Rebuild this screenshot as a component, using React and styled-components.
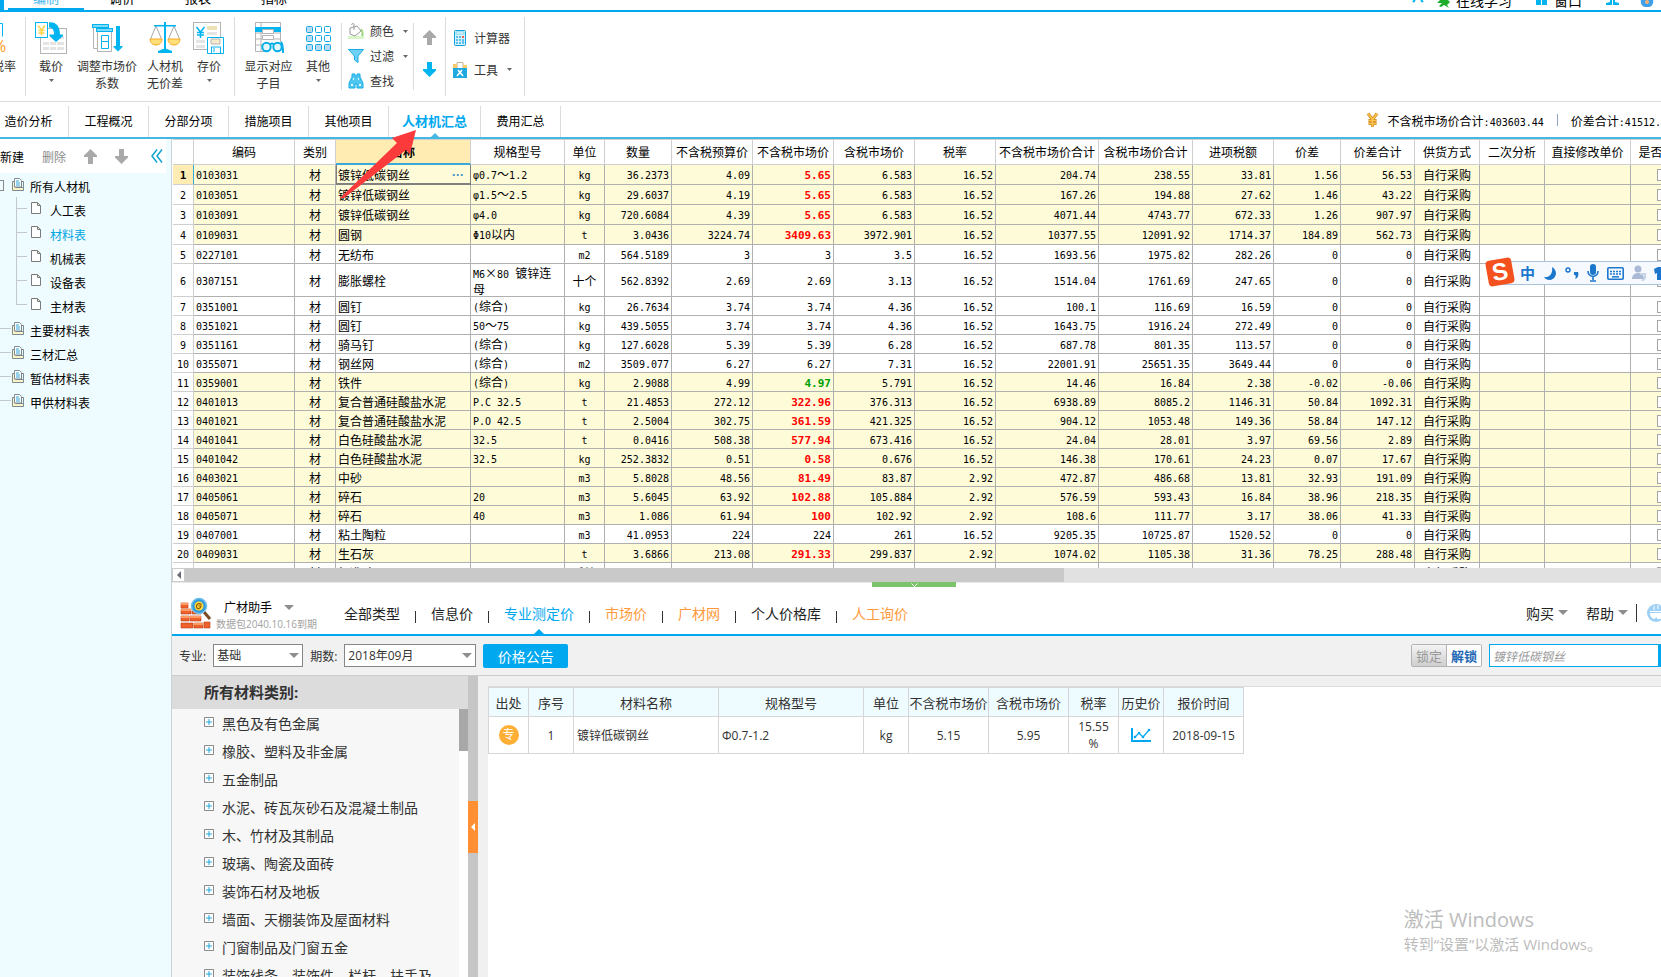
import React from 'react'
import styled, { createGlobalStyle, css } from 'styled-components'

const sans = '"Open Sans", "Noto Sans CJK SC", sans-serif'
const cjk = '"Noto Sans CJK SC", "Noto Sans", sans-serif'
const mono = '"DejaVu Sans Mono", "Noto Sans CJK SC", monospace'

const blue = '#00a8f0'
const cyan = '#00b4f0'

const GlobalStyle = createGlobalStyle`
  * {
    box-sizing: border-box;
  }
  body {
    margin: 0;
    background: #fff;
    color: #000;
    font-family: ${cjk};
    font-size: 12px;
    overflow: hidden;
  }
  button, input, select {
    font-family: inherit;
    font-size: inherit;
    color: inherit;
  }
  button {
    padding: 0;
    border: 0;
    background: none;
  }
  a {
    color: inherit;
    text-decoration: none;
  }
  svg {
    display: block;
    flex: none;
  }
`

/* ---------- data ---------- */

const menuTabs = ['编制', '调价', '报表', '指标']

const pageTabs = [
  '造价分析',
  '工程概况',
  '分部分项',
  '措施项目',
  '其他项目',
  '人材机汇总',
  '费用汇总',
]

const columns = [
  ['', 21],
  ['编码', 101],
  ['类别', 41],
  ['名称', 135],
  ['规格型号', 94],
  ['单位', 40],
  ['数量', 67],
  ['不含税预算价', 81],
  ['不含税市场价', 81],
  ['含税市场价', 81],
  ['税率', 81],
  ['不含税市场价合计', 103],
  ['含税市场价合计', 94],
  ['进项税额', 81],
  ['价差', 67],
  ['价差合计', 74],
  ['供货方式', 65],
  ['二次分析', 65],
  ['直接修改单价', 86],
  ['是否暂估', 64],
]

// code, name, spec, unit, amount, budget, market, taxed, rate, sum, taxed sum, tax, diff, diff sum
const materials = [
  ['0103031', '镀锌低碳钢丝', 'φ0.7～1.2', 'kg', '36.2373', '4.09', '5.65', '6.583', '16.52', '204.74', '238.55', '33.81', '1.56', '56.53'],
  ['0103051', '镀锌低碳钢丝', 'φ1.5～2.5', 'kg', '29.6037', '4.19', '5.65', '6.583', '16.52', '167.26', '194.88', '27.62', '1.46', '43.22'],
  ['0103091', '镀锌低碳钢丝', 'φ4.0', 'kg', '720.6084', '4.39', '5.65', '6.583', '16.52', '4071.44', '4743.77', '672.33', '1.26', '907.97'],
  ['0109031', '圆钢', 'Φ10以内', 't', '3.0436', '3224.74', '3409.63', '3972.901', '16.52', '10377.55', '12091.92', '1714.37', '184.89', '562.73'],
  ['0227101', '无纺布', '', 'm2', '564.5189', '3', '3', '3.5', '16.52', '1693.56', '1975.82', '282.26', '0', '0'],
  ['0307151', '膨胀螺栓', 'M6×80 镀锌连母', '十个', '562.8392', '2.69', '2.69', '3.13', '16.52', '1514.04', '1761.69', '247.65', '0', '0'],
  ['0351001', '圆钉', '(综合)', 'kg', '26.7634', '3.74', '3.74', '4.36', '16.52', '100.1', '116.69', '16.59', '0', '0'],
  ['0351021', '圆钉', '50～75', 'kg', '439.5055', '3.74', '3.74', '4.36', '16.52', '1643.75', '1916.24', '272.49', '0', '0'],
  ['0351161', '骑马钉', '(综合)', 'kg', '127.6028', '5.39', '5.39', '6.28', '16.52', '687.78', '801.35', '113.57', '0', '0'],
  ['0355071', '钢丝网', '(综合)', 'm2', '3509.077', '6.27', '6.27', '7.31', '16.52', '22001.91', '25651.35', '3649.44', '0', '0'],
  ['0359001', '铁件', '(综合)', 'kg', '2.9088', '4.99', '4.97', '5.791', '16.52', '14.46', '16.84', '2.38', '-0.02', '-0.06'],
  ['0401013', '复合普通硅酸盐水泥', 'P.C 32.5', 't', '21.4853', '272.12', '322.96', '376.313', '16.52', '6938.89', '8085.2', '1146.31', '50.84', '1092.31'],
  ['0401021', '复合普通硅酸盐水泥', 'P.O 42.5', 't', '2.5004', '302.75', '361.59', '421.325', '16.52', '904.12', '1053.48', '149.36', '58.84', '147.12'],
  ['0401041', '白色硅酸盐水泥', '32.5', 't', '0.0416', '508.38', '577.94', '673.416', '16.52', '24.04', '28.01', '3.97', '69.56', '2.89'],
  ['0401042', '白色硅酸盐水泥', '32.5', 'kg', '252.3832', '0.51', '0.58', '0.676', '16.52', '146.38', '170.61', '24.23', '0.07', '17.67'],
  ['0403021', '中砂', '', 'm3', '5.8028', '48.56', '81.49', '83.87', '2.92', '472.87', '486.68', '13.81', '32.93', '191.09'],
  ['0405061', '碎石', '20', 'm3', '5.6045', '63.92', '102.88', '105.884', '2.92', '576.59', '593.43', '16.84', '38.96', '218.35'],
  ['0405071', '碎石', '40', 'm3', '1.086', '61.94', '100', '102.92', '2.92', '108.6', '111.77', '3.17', '38.06', '41.33'],
  ['0407001', '粘土陶粒', '', 'm3', '41.0953', '224', '224', '261', '16.52', '9205.35', '10725.87', '1520.52', '0', '0'],
  ['0409031', '生石灰', '', 't', '3.6866', '213.08', '291.33', '299.837', '2.92', '1074.02', '1105.38', '31.36', '78.25', '288.48'],
  ['0413091', '标准砖', '', '千块', '12.3062', '300', '300', '349.56', '16.52', '3691.86', '4301.76', '609.9', '0', '0'],
]

const sourceTabs = [
  { text: '全部类型' },
  { text: '信息价' },
  { text: '专业测定价', active: true },
  { text: '市场价', color: '#ff9a3c' },
  { text: '广材网', color: '#ff9a3c' },
  { text: '个人价格库' },
  { text: '人工询价', color: '#ff9a3c' },
]

const categories = [
  '黑色及有色金属',
  '橡胶、塑料及非金属',
  '五金制品',
  '水泥、砖瓦灰砂石及混凝土制品',
  '木、竹材及其制品',
  '玻璃、陶瓷及面砖',
  '装饰石材及地板',
  '墙面、天棚装饰及屋面材料',
  '门窗制品及门窗五金',
  '装饰线条、装饰件、栏杆、扶手及其他',
]

const priceColumns = [
  ['出处', 40],
  ['序号', 45],
  ['材料名称', 145],
  ['规格型号', 145],
  ['单位', 45],
  ['不含税市场价', 80],
  ['含税市场价', 80],
  ['税率', 50],
  ['历史价', 45],
  ['报价时间', 80],
]

/* ---------- icons ---------- */

const Caret = ({ size = 5, color = '#6a6a6a' }) => (
  <svg width={size} height={Math.ceil(size / 2)} viewBox='0 0 10 5' preserveAspectRatio='none'>
    <path d='M0 0h10L5 5z' fill={color} />
  </svg>
)

const Arrow = ({ down, color }) => (
  <svg width='13' height='15' viewBox='0 0 13 15'>
    <path
      d='M6.500 0L13 6.500V8H9v7H4V8H0V6.500z'
      fill={color}
      transform={down ? 'rotate(180 6.500 7.500)' : undefined}
    />
  </svg>
)

const TaxIcon = () => (
  <svg width='32' height='32' viewBox='0 0 32 32'>
    <path d='M0 1.500h14.500v13' fill='none' stroke={cyan} />
    <text x='5' y='30' fontSize='16' fill='#ff9a1e' fontFamily='Open Sans, sans-serif'>
      %
    </text>
  </svg>
)

const LoadPriceIcon = () => (
  <svg width='32' height='32' viewBox='0 0 32 32'>
    <rect x='5.500' y='6.500' width='26' height='25' fill='#fff' stroke='#b4b4b4' />
    <path d='M8 20h6v3H8zM15 20h6v3h-6zM22 20h7v3h-7zM8 25h6v3H8zM15 25h6v3h-6zM22 25h7v3h-7zM24 14h5v3h-5z' fill='#e4e4e4' />
    <rect x='0.500' y='0.500' width='12' height='15' fill='#fff' stroke={cyan} />
    <path d='M3 3.500l3.500 4.500L10 3.500M6.500 8v5.500M3.500 8.500h6M3.500 11h6' fill='none' stroke='#ffd24a' strokeWidth='1.500' />
    <path d='M14 0.500c6-1 11 3 11 12h3v1.500L21 20l-6.500-6v-1.500H19c0-4-1-7-5-7z' fill={cyan} />
  </svg>
)

const AdjustIcon = () => (
  <svg width='32' height='32' viewBox='0 0 32 32'>
    <path d='M2.500 6v20.500H6' fill='none' stroke='#b4b4b4' />
    <rect x='1.500' y='2.500' width='16' height='3' fill='#7fd9f7' stroke={cyan} />
    <rect x='6.500' y='9.500' width='14' height='20' fill='#fff' stroke='#b4b4b4' />
    <rect x='5.500' y='6.500' width='16' height='3' fill='#7fd9f7' stroke={cyan} />
    <path d='M10.500 13.500h7v13h-7zM10.500 19.500h7' fill='#fff' stroke={cyan} />
    <path d='M25 4h4v20h2.500v1L27 29.500 22.500 25v-1H25z' fill={cyan} />
  </svg>
)

const ScaleIcon = () => (
  <svg width='32' height='32' viewBox='0 0 32 32'>
    <path d='M7 4L1.500 17M7 4l5.500 13M25 4l-5.500 13M25 4l5.500 13' stroke='#a8a8a8' fill='none' />
    <path d='M1 17h12c0 4-3 6-6 6s-6-2-6-6zM19 17h12c0 4-3 6-6 6s-6-2-6-6z' fill='#ffdf7a' stroke='#f7a821' />
    <path d='M5 3h22v1.500H5zM15 0h2v27h-2z' fill={cyan} />
    <path d='M14 27h4l5 2v2H9v-2z' fill={cyan} />
  </svg>
)

const SavePriceIcon = () => (
  <svg width='32' height='32' viewBox='0 0 32 32'>
    <rect x='0.500' y='0.500' width='27' height='27' fill='#fff' stroke='#b4b4b4' />
    <path d='M14 4h10v4H14z' fill='#efe1b6' />
    <path d='M14 10h10v3H14zM3 18h9v3H3zM3 23h9v3H3z' fill='#e4e4e4' />
    <path d='M3.500 5L7.500 10l4-5M7.500 10v6M4 10.500h7M4 13h7' fill='none' stroke={cyan} strokeWidth='1.500' />
    <path d='M14.500 15.500h16v16h-16z' fill='#fff' stroke={cyan} />
    <path d='M18 17h9v5h-9z' fill='#f6eccb' stroke='#b4b4b4' />
    <path d='M18.500 31v-6h9v6M21 26v4' fill='none' stroke={cyan} />
  </svg>
)

const ShowItemsIcon = () => (
  <svg width='32' height='32' viewBox='0 0 32 32'>
    <path d='M2.500 0.500h25v29h-25zM8 0v30M2 11h26M2 17h26M2 23h26' fill='#fff' stroke='#b4b4b4' />
    <path d='M2 5h26v5H2z' fill={cyan} />
    <path d='M9.500 7.500h11v4h-11zM9.500 13.500h11v4h-11z' fill='#fff' stroke='#b4b4b4' />
    <path d='M12 20h18v11H12z' fill='#fff' />
    <g fill='#e5f8fe' stroke='#08aee8' strokeWidth='2'>
      <circle cx='13.500' cy='25' r='4.200' />
      <circle cx='24.500' cy='25' r='4.200' />
      <path d='M17 23c1-2 3-2 4 0M28 20c2 2 2 6 2 11' fill='none' />
    </g>
  </svg>
)

const GridIcon = () => (
  <svg width='32' height='32' viewBox='0 0 32 32'>
    {[0, 1, 2].map((row) =>
      [0, 1, 2].map((col) => (
        <rect
          key={`${row}${col}`}
          x={4.5 + col * 9}
          y={4.5 + row * 9}
          width='6'
          height='6'
          rx='1'
          fill={col === 0 || row === 2 ? '#b9dcf2' : '#fff'}
          stroke='#12a9e4'
        />
      ))
    )}
  </svg>
)

const ColorIcon = () => (
  <svg width='16' height='16' viewBox='0 0 16 16'>
    <path d='M0 13h16v3H0z' fill='#d8f7c8' />
    <path d='M2 5l7-2 4 5-6 5-5-2zM6 7V1.500C6 0 3 0 4 2' fill='#fff' stroke='#999' />
    <path d='M13 6c2 3 2 5 1 7' fill='none' stroke='#9bd67d' strokeWidth='2' />
  </svg>
)

const FilterIcon = () => (
  <svg width='16' height='16' viewBox='0 0 16 16'>
    <path d='M0.500 1.500h15L10 8v6.500L6.500 12V8z' fill='#6fd0f5' stroke='#1baee6' />
  </svg>
)

const FindIcon = () => (
  <svg width='16' height='16' viewBox='0 0 16 16'>
    <path d='M4 1h3v2h2V1h3v3l3 6v5h-6v-4H7v4H1v-5l3-6z' fill='#4fc6f0' stroke='#14aee6' />
    <path d='M3 11h2v2H3zM11 11h2v2h-2zM5 5h1v2H5zM10 5h1v2h-1z' fill='#d9f5ff' />
  </svg>
)

const CalcIcon = () => (
  <svg width='16' height='16' viewBox='0 0 16 16'>
    <rect x='2.500' y='0.500' width='11' height='15' rx='1' fill='#d6f3fd' stroke='#0f9fdc' />
    <path d='M4 2h8v2H4z' fill='#fff' stroke='#3db8ea' strokeWidth='0.600' />
    <path d='M4 6h2v2H4zM7 6h2v2H7zM4 9h2v2H4zM7 9h2v2H7zM4 12h2v2H4zM7 12h2v2H7zM10 9h2v5h-2z' fill='#5cc1ea' />
    <path d='M10 6h2v2h-2z' fill='#f35b4f' />
  </svg>
)

const ToolIcon = () => (
  <svg width='16' height='16' viewBox='0 0 16 16'>
    <path d='M5 0.500h6v7H5z' fill='#fff' stroke='#c4b592' />
    <path d='M1 2h4v4H1zM11 3h4v4h-4z' fill='#f7cd6b' />
    <path d='M1 6h14v10H1z' fill='#1fa9e1' />
    <path d='M6 8l5 6M10 8l-5 6' stroke='#fff' strokeWidth='1.500' />
  </svg>
)

const YuanIcon = () => (
  <svg width='13' height='16' viewBox='0 0 13 16'>
    <path d='M2 1.500l4.500 6 4.500-6M6.500 7v8M2.500 8.500h8M2.500 11.500h8' fill='none' stroke='#c98a2b' strokeWidth='3' />
    <path d='M2 1.500l4.500 6 4.500-6M6.500 7v8M2.500 8.500h8M2.500 11.500h8' fill='none' stroke='#ffc34d' strokeWidth='1.600' />
  </svg>
)

const FolderIcon = () => (
  <svg width='12' height='13' viewBox='0 0 12 13'>
    <path d='M0.500 3.500h3v6h8v3H0.500z' fill='#fdf3c9' stroke='#7d8a90' />
    <path d='M2.500 0.500h5l2 2v6.500h-7z' fill='#fff' stroke='#7d8a90' />
    <path d='M4 3h3M4 5h4M4 7h4' stroke='#2aa4d8' />
    <path d='M9.500 3.500h2v6' fill='none' stroke='#7d8a90' />
  </svg>
)

const PageIcon = () => (
  <svg width='11' height='12' viewBox='0 0 11 12'>
    <path d='M0.500 0.500h6l3 3v8h-9zM6.500 0.500v3h3' fill='#fff' stroke='#7b7b7b' />
  </svg>
)

const PlusBox = () => (
  <svg width='10' height='10' viewBox='0 0 10 10'>
    <path d='M0.500 0.500h9v9h-9z' fill='#fff' stroke='#8a8a8a' />
    <path d='M2 5h6M5 2v6' stroke='#1ea5d8' />
  </svg>
)

const HelperLogo = () => (
  <svg width='32' height='32' viewBox='0 0 32 32'>
    <g stroke='#b83c14' strokeWidth='0.600'>
      <path d='M1 6h7v5H1zM1 12h10v5H1zM12 14h9v3h-9zM1 19h8v5H1zM10 19h11v5H10zM1 26h12v5H1zM14 26h9v5h-9zM24 25h6v6h-6z' fill='#f0622d' />
    </g>
    <path d='M1 6h7v2H1zM1 12h10v2H1zM1 19h8v2H1zM10 19h11v2H10zM14 26h9v2h-9z' fill='#ff9a63' />
    <path d='M24 15l6 7' stroke='#7a4a20' strokeWidth='3' />
    <circle cx='19' cy='9' r='7.500' fill='#2f9be0' stroke='#6fbfe9' strokeWidth='1.500' />
    <circle cx='19' cy='9' r='4.500' fill='#ffd83a' />
    <path d='M21.500 7.500c-3-2-5.500 0-5 2.500s4 2 4.500-1h-2.500' fill='none' stroke='#8a5a00' strokeWidth='1.200' />
  </svg>
)

const ChartIcon = () => (
  <svg width='20' height='16' viewBox='0 0 20 16'>
    <path d='M1 1v13h19' fill='none' stroke={blue} strokeWidth='2' />
    <path d='M4 10l4-4 4 4 6-7' fill='none' stroke={blue} strokeWidth='1.200' />
    <g fill={blue}>
      <circle cx='4' cy='10' r='1.300' />
      <circle cx='8' cy='6' r='1.300' />
      <circle cx='12' cy='10' r='1.300' />
      <circle cx='18' cy='3' r='1.300' />
    </g>
  </svg>
)

/* ---------- top ---------- */

const Page = styled.div`
  position: relative;
  display: flex;
  flex-direction: column;
  height: 100vh;
  overflow: hidden;
`

const MenuBar = styled.header`
  display: flex;
  justify-content: space-between;
  height: 12px;
  flex: none;
  border-bottom: 2px solid ${blue};
  overflow: hidden;
`

const MenuGroup = styled.div`
  display: flex;
  align-items: flex-end;
  gap: ${({ $gap }) => $gap || 0}px;
  padding-left: 4px;
  ${({ $edge }) => $edge && `border-left: 4px solid ${blue};`}
`

const MenuTab = styled.button`
  width: 76px;
  flex: none;
  font-size: 13px;
  line-height: 16px;
  padding-bottom: ${({ $active }) => ($active ? 2 : 4)}px;
  ${({ $active }) =>
    $active && `color: #3fb6ee; border-bottom: 2px solid ${blue};`}
`

const MenuLink = styled.a`
  display: flex;
  align-items: flex-end;
  gap: 6px;
  font-size: 14px;
  line-height: 16px;
  padding-bottom: 2px;
`

const Ribbon = styled.div`
  display: flex;
  height: 90px;
  flex: none;
  padding: 5px 0;
  border-bottom: 1px solid #dcdcdc;
  color: #333;
`

const RibbonGroup = styled.div`
  display: flex;
  padding-right: ${({ $end }) => $end || 0}px;
  border-right: 1px solid #dcdcdc;
  ${({ $clip }) => $clip && 'margin-left: -17px;'}
`

const RibbonButton = styled.button`
  display: flex;
  flex-direction: column;
  align-items: center;
  width: ${({ $width }) => $width}px;
  padding-top: 5px;
  line-height: 17px;
  white-space: nowrap;
  svg + span {
    margin-top: 3px;
    margin-bottom: 5px;
  }
`

const SmallColumn = styled.div`
  display: flex;
  flex-direction: column;
  justify-content: ${({ $spread }) => ($spread ? 'center' : 'flex-start')};
  align-items: ${({ $center }) => ($center ? 'center' : 'stretch')};
  gap: ${({ $gap }) => $gap || 0}px;
  width: ${({ $width }) => $width}px;
  margin: 6px 0;
  padding: 0 6px ${({ $spread }) => ($spread ? 6 : 0)}px;
  ${({ $line }) => $line && 'border-left: 1px solid #dcdcdc; margin-left: 7px;'}
`

const ArrowColumn = styled(SmallColumn)`
  margin-left: 0;
`

const SmallButton = styled.button`
  display: flex;
  align-items: center;
  gap: 6px;
  height: 16px;
  line-height: 16px;
  white-space: nowrap;
  span {
    margin-right: 3px;
  }
`

const PageTabs = styled.nav`
  display: flex;
  align-items: stretch;
  height: 37px;
  flex: none;
  border-bottom: 2px solid #46b6e2;
  white-space: nowrap;
`

const PageTab = styled.a`
  position: relative;
  display: flex;
  align-items: center;
  justify-content: center;
  width: ${({ $active }) => ($active ? 92 : 80)}px;
  margin-top: 4px;
  padding-bottom: 2px;
  border-right: 1px solid #dcdcdc;
  &:first-child {
    margin-left: -11px;
  }
  ${({ $active }) =>
    $active &&
    css`
      color: ${blue};
      font-size: 13px;
      font-weight: 700;
      &::after {
        content: '';
        position: absolute;
        bottom: 0;
        border: 4px solid transparent;
        border-top: 0;
        border-bottom-color: #46b6e2;
      }
    `}
`

const Totals = styled.div`
  display: flex;
  align-items: center;
  gap: 9px;
  margin-left: auto;
  padding-top: 1px;
`

const Digits = styled.span`
  font-family: ${mono};
  font-size: ${({ $strong }) => ($strong ? 11 : 10)}px;
`

const Bar = styled.i`
  width: 1px;
  height: ${({ $height }) => $height || 12}px;
  margin: ${({ $margin }) => $margin || '0 4px'};
  background: ${({ $color }) => $color || '#8fa3c0'};
`

/* ---------- left tree ---------- */

const Body = styled.div`
  display: flex;
  flex: 1;
  min-height: 0;
`

const Side = styled.aside`
  width: 172px;
  flex: none;
  background: #effcff;
  border-right: 1px solid #c9d3d6;
`

const SideTools = styled.div`
  display: flex;
  align-items: center;
  gap: 18px;
  width: 166px;
  height: 34px;
  background: #fff;
  white-space: nowrap;
`

const DeleteButton = styled.button`
  color: #8c8c8c;
`

const FoldButton = styled.button`
  margin-left: 5px;
`

const Tree = styled.ul`
  margin: 0;
  padding: 1px 0 0;
  list-style: none;
`

const TreeItem = styled.li`
  position: relative;
  display: flex;
  align-items: center;
  height: 24px;
  gap: ${({ $child }) => ($child ? 8 : 6)}px;
  padding-left: ${({ $child }) => ($child ? 31 : 12)}px;
  color: ${({ $active }) => ($active ? '#00a5e0' : '#000')};
  svg {
    margin-bottom: 4px;
  }
  &::before {
    content: '';
    position: absolute;
    top: 10px;
    left: ${({ $child }) => ($child ? 16 : 0)}px;
    width: 11px;
    border-top: 1px solid #c3c9cb;
  }
  ${({ $root }) =>
    $root &&
    css`
      &::before {
        top: 6px;
        width: 3px;
        height: 9px;
        border: 1px solid #8a8a8a;
        border-left: 0;
      }
    `}
  ${({ $child, $last }) =>
    $child &&
    css`
      &::after {
        content: '';
        position: absolute;
        top: -1px;
        left: 16px;
        height: ${$last ? 11 : 24}px;
        border-left: 1px solid #c3c9cb;
      }
    `}
`

/* ---------- materials table ---------- */

const Content = styled.main`
  display: flex;
  flex-direction: column;
  flex: 1;
  min-width: 0;
`

const GridBox = styled.div`
  height: 429px;
  flex: none;
  padding-left: 1px;
  overflow: hidden;
`

const Grid = styled.table`
  width: 1522px;
  table-layout: fixed;
  border-collapse: separate;
  border-spacing: 0;
  line-height: 14px;
`

const HeadCell = styled.th`
  height: 26px;
  padding: 0;
  border: solid #cfcfcf;
  border-width: 1px 1px 1px 0;
  font-weight: ${({ $active }) => ($active ? 700 : 400)};
  white-space: nowrap;
  ${({ $active }) =>
    $active && 'background: #ffecb3; border-bottom: 2px solid #3aa9d8;'}
`

const Row = styled.tr`
  height: ${({ $height }) => $height}px;
  background: ${({ $changed }) => ($changed ? '#fefbd8' : '#fff')};
  && > * {
    padding-top: ${({ $height }) => ($height === 20 ? 0 : 1)}px;
  }
`

const Cell = styled.td`
  padding: 0 2px;
  border: solid #b0b0b0;
  border-width: 0 1px 1px 0;
  text-align: ${({ $align }) => $align || 'left'};
  font-weight: ${({ $tone }) => ($tone ? 700 : 400)};
  color: ${({ $tone }) => $tone || '#000'};
  ${({ $selected }) =>
    $selected &&
    'border-color: #808080; box-shadow: inset 0 -1px #808080, inset 1px 0 #808080;'}
`

const NumberCell = styled.th`
  padding: 0;
  border: solid #cfcfcf;
  border-width: 0 1px 1px 0;
  background: ${({ $active }) => ($active ? '#ffecb3' : '#fff')};
  font-weight: ${({ $active }) => ($active ? 700 : 400)};
  ${({ $active }) => $active && 'border-right-color: #3aa9d8;'}
`

const NameBox = styled.div`
  display: flex;
  justify-content: space-between;
  white-space: nowrap;
  button {
    padding-right: 4px;
    color: #3a8fd0;
    font-family: 'Liberation Sans', sans-serif;
    font-weight: 700;
    line-height: 12px;
  }
`

const Tick = styled.input`
  appearance: none;
  display: block;
  width: 12px;
  height: 12px;
  margin: 0 auto;
  border: 1px solid #a6a6a6;
  background: #fff;
`

const ScrollBar = styled.div`
  display: flex;
  height: 14px;
  flex: none;
  background: #e1e1e1;
  button {
    display: grid;
    place-items: center;
    width: 13px;
    background: #fff;
    border: 1px solid #ccc;
  }
  div {
    width: 59%;
    background: #c9c9c9;
  }
`

const Divider = styled.div`
  display: flex;
  justify-content: center;
  height: 5px;
  flex: none;
  padding-right: 5px;
  border-top: 1px solid #e8e8e8;
`

const DividerGrip = styled.button`
  display: grid;
  place-items: center;
  width: 84px;
  height: 5px;
  margin-top: -1px;
  background: #7cc46c;
`

/* ---------- price helper ---------- */

const HelperHead = styled.div`
  display: flex;
  align-items: center;
  height: 49px;
  flex: none;
  padding-left: 8px;
  border-bottom: 2px solid ${blue};
  font-family: ${sans};
  white-space: nowrap;
  > svg {
    margin-top: 5px;
  }
`

const HelperName = styled.div`
  width: 132px;
  padding: 9px 0 0 4px;
  line-height: 16px;
  button {
    display: flex;
    align-items: center;
    gap: 12px;
    padding-left: 8px;
  }
  small {
    display: block;
    font-size: 10px;
    color: #a2a2a2;
  }
`

const SourceTab = styled.button`
  position: relative;
  height: 47px;
  padding: 5px 0 0;
  font-size: 14px;
  color: ${({ $color }) => $color || '#222'};
  ${({ $active }) =>
    $active &&
    css`
      color: ${blue};
      &::after {
        content: '';
        position: absolute;
        bottom: 0;
        left: 50%;
        margin-left: -5px;
        border: 5px solid transparent;
        border-top: 0;
        border-bottom-color: ${blue};
      }
    `}
`

const HeadLinks = styled.div`
  display: flex;
  align-items: center;
  gap: 18px;
  margin-left: auto;
  padding-top: 4px;
  font-size: 14px;
  color: #222;
  button {
    display: flex;
    align-items: center;
    gap: 4px;
  }
`

const FilterBar = styled.form`
  display: flex;
  align-items: center;
  height: 40px;
  flex: none;
  padding-left: 7px;
  background: #f1f1f1;
  border-bottom: 1px solid #cdcdcd;
  color: #333;
  font-family: ${sans};
`

const SelectBox = styled.div`
  position: relative;
  width: ${({ $width }) => $width}px;
  margin: 0 7px;
  select {
    appearance: none;
    display: block;
    width: 100%;
    height: 23px;
    padding: 0 3px;
    border: 1px solid #868686;
    border-radius: 0;
    background: #fff;
  }
  svg {
    position: absolute;
    top: 9px;
    right: 4px;
    pointer-events: none;
  }
`

const NoticeButton = styled.button`
  width: 85px;
  height: 24px;
  border-radius: 2px;
  background: ${blue};
  color: #fff;
  font-size: 14px;
`

const LockGroup = styled.div`
  display: flex;
  height: 23px;
  margin-left: auto;
  margin-right: 7px;
  border: 1px solid #b3b3b3;
  border-radius: 2px;
  font-size: 13px;
`

const LockButton = styled.button`
  width: 34px;
  background: ${({ $on }) =>
    $on ? '#fdfdfd' : 'linear-gradient(#f4f4f4, #cfcfcf)'};
  color: ${({ $on }) => ($on ? '#2268b4' : '#999')};
  font-weight: ${({ $on }) => ($on ? 700 : 400)};
  & + & {
    width: 35px;
    border-left: 1px solid #b3b3b3;
  }
`

const SearchInput = styled.input`
  width: 170px;
  height: 23px;
  padding: 0 3px;
  border: 1px solid ${blue};
  border-radius: 0;
  background: #fff;
  color: #999;
  font-style: italic;
`

const SearchButton = styled.button`
  width: 2px;
  height: 23px;
  background: ${blue};
`

const HelperBody = styled.div`
  display: flex;
  flex: 1;
  min-height: 0;
  font-family: ${sans};
  color: #333;
`

const Categories = styled.section`
  display: flex;
  flex-direction: column;
  width: 296px;
  flex: none;
  background: #f7f7f7;
  h2 {
    flex: none;
    height: 33px;
    margin: 0;
    padding-left: 32px;
    background: #dcdcdc;
    font-size: 15px;
    line-height: 33px;
  }
`

const CategoryScroll = styled.div`
  display: flex;
  min-height: 0;
  flex: 1;
  overflow: hidden;
  ul {
    flex: 1;
    min-width: 0;
    margin: 0;
    padding: 1px 0 0 32px;
    list-style: none;
  }
  li {
    display: flex;
    align-items: center;
    gap: 8px;
    height: 28px;
    font-size: 14px;
    overflow: hidden;
  }
  li svg {
    margin-bottom: 4px;
  }
  li span {
    width: 212px;
    height: 28px;
    line-height: 28px;
  }
`

const Track = styled.div`
  width: 9px;
  background: #fff;
  &::before {
    content: '';
    display: block;
    height: 42px;
    background: #a8a8a8;
  }
`

const Splitter = styled.div`
  width: 10px;
  flex: none;
  padding-top: 125px;
  background: #c6c6c6;
  button {
    display: grid;
    place-items: center;
    width: 10px;
    height: 52px;
    background: #ff8f33;
  }
`

const PriceArea = styled.section`
  flex: 1;
  min-width: 0;
  padding: 10px 0 0 10px;
  background: #f0f0f0;
`

const PriceSheet = styled.div`
  height: 100%;
  background: #fff;
  border-top: 1px solid #dcdcdc;
`

const PriceTable = styled.table`
  width: 755px;
  table-layout: fixed;
  border-collapse: collapse;
  text-align: center;
  th,
  td {
    padding: 0;
    border: 1px solid #d6d6d6;
  }
  th {
    height: 29px;
    background: #effcff;
    font-size: 13px;
    font-weight: 400;
    white-space: nowrap;
  }
  td {
    height: 37px;
    line-height: 17px;
  }
  td:nth-child(3),
  td:nth-child(4) {
    padding-left: 3px;
    text-align: left;
  }
  td svg {
    margin: 0 auto;
  }
`

const SourceBadge = styled.span`
  display: block;
  width: 20px;
  height: 20px;
  margin: 0 auto;
  border-radius: 50%;
  background: #ffaf35;
  color: #fff;
  line-height: 20px;
`

const Watermark = styled.div`
  position: absolute;
  right: 59px;
  bottom: 22px;
  font-family: ${sans};
  font-size: 15px;
  line-height: 22px;
  color: #bcbcbc;
  p {
    margin: 0;
  }
  p:first-child {
    font-size: 20px;
    line-height: 26px;
  }
`

/* ---------- floating parts ---------- */

const Pointer = styled.svg`
  position: absolute;
  left: 338px;
  top: 128px;
`

const InputMethod = styled.div`
  position: absolute;
  top: 261px;
  right: 0;
  display: flex;
  align-items: center;
  gap: 8px;
  width: 160px;
  height: 24px;
  padding-left: 19px;
  border: solid #a9c3da;
  border-width: 1px 0;
  background: #f6fafe;
  color: #1b76cc;
  b {
    font-size: 15px;
    line-height: 20px;
  }
`

const SogouLogo = styled.span`
  position: absolute;
  left: -14px;
  top: -3px;
  width: 26px;
  height: 26px;
  border-radius: 4px;
  background: #f4511e;
  color: #fff;
  font: 700 24px/26px 'Liberation Sans', sans-serif;
  text-align: center;
  transform: rotate(-10deg);
`

// Latin runs are set in the half-width face, Chinese runs in the full-width one
const Mixed = ({ text }) =>
  text
    .split(/([\x20-\x7e\u0370-\u03ff]+)/)
    .filter(Boolean)
    .map((part, i) =>
      /^[\x20-\x7e\u0370-\u03ff]/.test(part) ? <Digits key={i}>{part}</Digits> : part
    )

const priceTone = (budget, market) => {
  const diff = Number(market) - Number(budget)
  if (diff === 0) return undefined
  return diff > 0 ? '#ff0000' : '#00a000'
}

const rowHeight = (index) => {
  if (index < 4) return 20
  return index === 5 ? 33 : 19
}

const MaterialRow = ({ item, index }) => {
  const [code, name, spec, unit, amount, budget, market, ...rest] = item
  const tone = priceTone(budget, market)
  const first = index === 0
  return (
    <Row $height={rowHeight(index)} $changed={Boolean(tone)}>
      <NumberCell scope='row' $active={first}>
        <Digits $strong={first}>{index + 1}</Digits>
      </NumberCell>
      <Cell>
        <Digits>{code}</Digits>
      </Cell>
      <Cell $align='center'>材</Cell>
      <Cell $selected={first}>
        <NameBox>
          {name}
          {first && <button type='button'>···</button>}
        </NameBox>
      </Cell>
      <Cell>
        <Mixed text={spec} />
      </Cell>
      <Cell $align='center'>
        <Mixed text={unit} />
      </Cell>
      <Cell $align='right'>
        <Digits>{amount}</Digits>
      </Cell>
      <Cell $align='right'>
        <Digits>{budget}</Digits>
      </Cell>
      <Cell $align='right' $tone={tone}>
        <Digits $strong={Boolean(tone)}>{market}</Digits>
      </Cell>
      {rest.map((value, i) => (
        <Cell key={i} $align='right'>
          <Digits>{value}</Digits>
        </Cell>
      ))}
      <Cell $align='center'>自行采购</Cell>
      <Cell />
      <Cell />
      <Cell>
        <Tick type='checkbox' aria-label={`是否暂估 ${index + 1}`} />
      </Cell>
    </Row>
  )
}

const App = () => {
  return (
    <Page>
      <GlobalStyle />
      <MenuBar>
        <MenuGroup $edge>
          {menuTabs.map((tab, i) => (
            <MenuTab key={tab} $active={i === 0}>
              {tab}
            </MenuTab>
          ))}
        </MenuGroup>
        <MenuGroup $gap={24}>
          <MenuLink href='#study'>
            <svg width='38' height='10' viewBox='0 0 38 10'>
              <path d='M1 4l2-2M11 4L9 2' stroke={cyan} strokeWidth='2' />
              <path d='M25 5l4-4h6l3 3-3 3 2 3-5-3-3 2-2-1 3-3z' fill='#1fae2b' />
            </svg>
            在线学习
          </MenuLink>
          <MenuLink href='#window'>
            <svg width='12' height='9' viewBox='0 0 12 9'>
              <path d='M0 0h5v6H0zM6 0h5v6H6z' fill={cyan} />
            </svg>
            窗口
          </MenuLink>
          <MenuLink href='#account'>
            <svg width='55' height='9' viewBox='0 0 55 9'>
              <path d='M0 6V4l4-1V0h2v6zM7 6V0h2v3l4 1v2z' fill={cyan} />
              <path d='M35 0h12c1 4-1 8-4 8h-4c-3 0-5-4-4-8z' fill='#3f9fe8' />
              <circle cx='41' cy='3' r='2' fill='#f2b27a' />
            </svg>
          </MenuLink>
        </MenuGroup>
      </MenuBar>

      <Ribbon>
        <RibbonGroup $clip>
          <RibbonButton $width={42}>
            <TaxIcon />
            <span>税率</span>
          </RibbonButton>
        </RibbonGroup>
        <RibbonGroup $end={8}>
          <RibbonButton $width={50}>
            <LoadPriceIcon />
            <span>载价</span>
            <Caret />
          </RibbonButton>
          <RibbonButton $width={62}>
            <AdjustIcon />
            <span>
              调整市场价
              <br />
              系数
            </span>
          </RibbonButton>
          <RibbonButton $width={54}>
            <ScaleIcon />
            <span>
              人材机
              <br />
              无价差
            </span>
          </RibbonButton>
          <RibbonButton $width={34}>
            <SavePriceIcon />
            <span>存价</span>
            <Caret />
          </RibbonButton>
        </RibbonGroup>
        <RibbonGroup>
          <RibbonButton $width={67}>
            <ShowItemsIcon />
            <span>
              显示对应
              <br />
              子目
            </span>
          </RibbonButton>
          <RibbonButton $width={32}>
            <GridIcon />
            <span>其他</span>
            <Caret />
          </RibbonButton>
          <SmallColumn $width={72} $line $gap={9}>
            <SmallButton>
              <ColorIcon />
              <span>颜色</span>
              <Caret />
            </SmallButton>
            <SmallButton>
              <FilterIcon />
              <span>过滤</span>
              <Caret />
            </SmallButton>
            <SmallButton>
              <FindIcon />
              <span>查找</span>
            </SmallButton>
          </SmallColumn>
          <ArrowColumn $width={32} $line $spread $center $gap={17}>
            <button aria-label='上移'>
              <Arrow color='#a9a9a9' />
            </button>
            <button aria-label='下移'>
              <Arrow down color={cyan} />
            </button>
          </ArrowColumn>
        </RibbonGroup>
        <RibbonGroup>
          <SmallColumn $width={78} $spread $gap={16}>
            <SmallButton>
              <CalcIcon />
              <span>计算器</span>
            </SmallButton>
            <SmallButton>
              <ToolIcon />
              <span>工具</span>
              <Caret />
            </SmallButton>
          </SmallColumn>
        </RibbonGroup>
      </Ribbon>

      <PageTabs>
        {pageTabs.map((tab) => (
          <PageTab key={tab} href={`#${tab}`} $active={tab === '人材机汇总'}>
            {tab}
          </PageTab>
        ))}
        <Totals>
          <YuanIcon />
          <span>
            <Mixed text='不含税市场价合计:403603.44' />
          </span>
          <Bar />
          <span>
            <Mixed text='价差合计:41512.' />
          </span>
        </Totals>
      </PageTabs>

      <Body>
        <Side>
          <SideTools>
            <button>新建</button>
            <DeleteButton>删除</DeleteButton>
            <button aria-label='上移'>
              <Arrow color='#a9a9a9' />
            </button>
            <button aria-label='下移'>
              <Arrow down color='#a9a9a9' />
            </button>
            <FoldButton aria-label='收起'>
              <svg width='12' height='14' viewBox='0 0 12 14'>
                <path d='M6 0.500L1 7l5 6.500M11 0.500L6 7l5 6.500' fill='none' stroke='#12a5cf' strokeWidth='1.500' />
              </svg>
            </FoldButton>
          </SideTools>
          <Tree>
            <TreeItem $root>
              <FolderIcon />
              所有人材机
            </TreeItem>
            {['人工表', '材料表', '机械表', '设备表', '主材表'].map((name, i) => (
              <TreeItem key={name} $child $active={i === 1} $last={i === 4}>
                <PageIcon />
                {name}
              </TreeItem>
            ))}
            {['主要材料表', '三材汇总', '暂估材料表', '甲供材料表'].map((name) => (
              <TreeItem key={name}>
                <FolderIcon />
                {name}
              </TreeItem>
            ))}
          </Tree>
        </Side>

        <Content>
          <GridBox>
            <Grid>
              <colgroup>
                {columns.map(([name, width]) => (
                  <col key={name} width={width} />
                ))}
              </colgroup>
              <thead>
                <tr>
                  {columns.map(([name]) => (
                    <HeadCell key={name} scope='col' $active={name === '名称'}>
                      {name}
                    </HeadCell>
                  ))}
                </tr>
              </thead>
              <tbody>
                {materials.map((item, index) => (
                  <MaterialRow key={item[0]} item={item} index={index} />
                ))}
              </tbody>
            </Grid>
          </GridBox>
          <ScrollBar>
            <button aria-label='向左'>
              <svg width='4' height='8' viewBox='0 0 4 8'>
                <path d='M4 0v8L0 4z' fill='#6b6b75' />
              </svg>
            </button>
            <div />
          </ScrollBar>
          <Divider>
            <DividerGrip aria-label='折叠'>
              <svg width='7' height='4' viewBox='0 0 7 4'>
                <path d='M0.500 0.500l3 3 3-3' fill='none' stroke='#fff' />
              </svg>
            </DividerGrip>
          </Divider>

          <HelperHead>
            <HelperLogo />
            <HelperName>
              <button>
                广材助手
                <Caret size={10} color='#8e8e8e' />
              </button>
              <small>数据包2040.10.16到期</small>
            </HelperName>
            {sourceTabs.map((tab, i) => (
              <React.Fragment key={tab.text}>
                {i > 0 && <Bar $color='#333' $margin='12px 15px 0' />}
                <SourceTab $active={tab.active} $color={tab.color}>
                  {tab.text}
                </SourceTab>
              </React.Fragment>
            ))}
            <HeadLinks>
              <button>
                购买
                <Caret size={10} color='#8e8e8e' />
              </button>
              <button>
                帮助
                <Caret size={10} color='#8e8e8e' />
              </button>
              <Bar $color='#333' $height={18} $margin='0 -8px 0 -10px' />
              <svg width='14' height='18' viewBox='0 0 14 18'>
                <circle cx='9' cy='9' r='9' fill='#9fd0f5' />
                <path d='M3 9h11v6h-4v-2l-3 2c-3-1-4-3-4-6z' fill='#fff' />
                <path d='M3 7.500h11M7 2v4M11 1v4' stroke='#fff' />
              </svg>
            </HeadLinks>
          </HelperHead>

          <FilterBar>
            <label htmlFor='major'>专业:</label>
            <SelectBox $width={90}>
              <select id='major' defaultValue='基础'>
                <option>基础</option>
              </select>
              <Caret size={10} color='#8e8e8e' />
            </SelectBox>
            <label htmlFor='period'>期数:</label>
            <SelectBox $width={132}>
              <select id='period' defaultValue='2018年09月'>
                <option>2018年09月</option>
              </select>
              <Caret size={10} color='#8e8e8e' />
            </SelectBox>
            <NoticeButton type='button'>价格公告</NoticeButton>
            <LockGroup>
              <LockButton type='button'>锁定</LockButton>
              <LockButton type='button' $on>
                解锁
              </LockButton>
            </LockGroup>
            <SearchInput aria-label='搜索' defaultValue='镀锌低碳钢丝' />
            <SearchButton type='button' aria-label='搜索' />
          </FilterBar>

          <HelperBody>
            <Categories>
              <h2>所有材料类别:</h2>
              <CategoryScroll>
                <ul>
                  {categories.map((name) => (
                    <li key={name}>
                      <PlusBox />
                      <span>{name}</span>
                    </li>
                  ))}
                </ul>
                <Track />
              </CategoryScroll>
            </Categories>
            <Splitter>
              <button aria-label='收起'>
                <svg width='4' height='8' viewBox='0 0 4 8'>
                  <path d='M4 0v8L0 4z' fill='#fff' />
                </svg>
              </button>
            </Splitter>
            <PriceArea>
              <PriceSheet>
                <PriceTable>
                  <colgroup>
                    {priceColumns.map(([name, width]) => (
                      <col key={name} width={width} />
                    ))}
                  </colgroup>
                  <thead>
                    <tr>
                      {priceColumns.map(([name]) => (
                        <th key={name} scope='col'>
                          {name}
                        </th>
                      ))}
                    </tr>
                  </thead>
                  <tbody>
                    <tr>
                      <td>
                        <SourceBadge>专</SourceBadge>
                      </td>
                      <td>1</td>
                      <td>镀锌低碳钢丝</td>
                      <td>Φ0.7-1.2</td>
                      <td>kg</td>
                      <td>5.15</td>
                      <td>5.95</td>
                      <td>
                        15.55
                        <br />%
                      </td>
                      <td>
                        <ChartIcon />
                      </td>
                      <td>2018-09-15</td>
                    </tr>
                  </tbody>
                </PriceTable>
              </PriceSheet>
            </PriceArea>
          </HelperBody>
        </Content>
      </Body>

      <Watermark>
        <p>激活 Windows</p>
        <p>转到“设置”以激活 Windows。</p>
      </Watermark>

      <InputMethod>
        <SogouLogo>S</SogouLogo>
        <b>中</b>
        <svg width='14' height='15' viewBox='0 0 14 15'>
          <path d='M9 1c6 3 5 12-2 13-3 0-5-1-6-3 6 1 9-4 8-10z' fill='currentColor' />
        </svg>
        <svg width='14' height='14' viewBox='0 0 14 14'>
          <circle cx='3' cy='4' r='2' fill='none' stroke='currentColor' strokeWidth='1.500' />
          <path d='M9 6h4c1 3 0 6-3 7 1-2 1-3 0-4H9z' fill='currentColor' />
        </svg>
        <svg width='12' height='18' viewBox='0 0 12 18'>
          <rect x='3' y='0' width='6' height='11' rx='3' fill='currentColor' />
          <path d='M1 7c0 7 10 7 10 0M6 12v4M3 17h6' fill='none' stroke='currentColor' strokeWidth='1.600' />
        </svg>
        <svg width='17' height='13' viewBox='0 0 17 13'>
          <rect x='0.800' y='0.800' width='15.400' height='11.400' rx='1' fill='none' stroke='currentColor' strokeWidth='1.600' />
          <path d='M3 4.500h11M3 7h11' stroke='currentColor' strokeWidth='1.500' strokeDasharray='2 1' />
          <path d='M5 9.800h7' stroke='currentColor' strokeWidth='1.500' />
        </svg>
        <svg width='14' height='16' viewBox='0 0 14 16'>
          <circle cx='6' cy='4' r='3.500' fill='#a9b9d6' />
          <path d='M0 14c0-8 12-8 12 0z' fill='#a9b9d6' />
          <path d='M8 9h5v4l-3 3' fill='none' stroke='#c8d3e6' strokeWidth='2' />
        </svg>
        <svg width='10' height='15' viewBox='0 0 10 15'>
          <path d='M0 3l4-2h6v13H3V7L1 8z' fill='currentColor' />
        </svg>
      </InputMethod>

      <Pointer width='80' height='72' viewBox='0 0 80 72' aria-hidden='true'>
        <path d='M78 2L54 10l5 5L2 70l4 0 62-48 4 4z' fill='#fb3b3b' />
      </Pointer>
    </Page>
  )
}

export default App
